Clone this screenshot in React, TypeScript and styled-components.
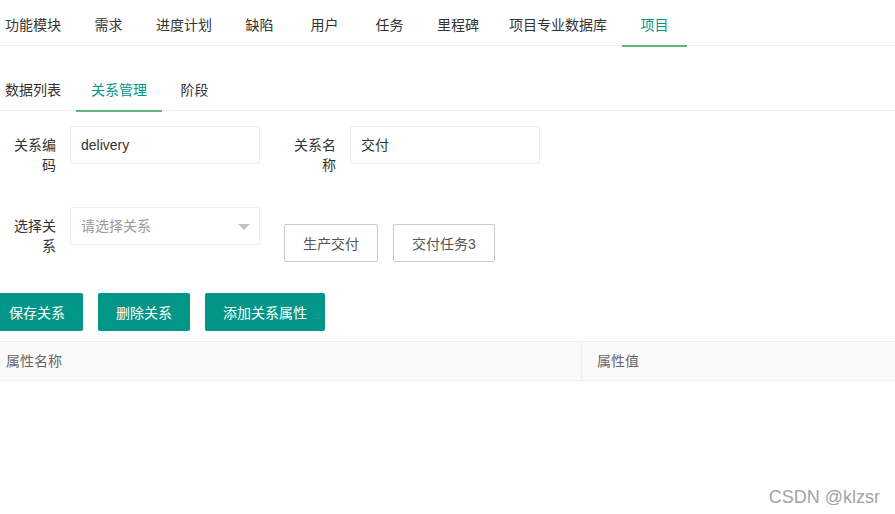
import styled, { createGlobalStyle } from 'styled-components'

const GlobalStyle = createGlobalStyle`
    html, body {
        margin: 0;
        padding: 0;
        overflow: hidden;
        background: #fff;
    }
    body {
        font-family: "Liberation Sans", "Noto Sans CJK SC", sans-serif;
        font-size: 14px;
        color: #333;
    }
`;

const Page = styled.div`
    position: relative;
    width: 895px;
    height: 514px;
    overflow: hidden;
`;

const TabBar = styled.ul<{ $top: number }>`
    display: flex;
    list-style: none;
    margin: ${p => p.$top}px 0 0 -10px;
    padding: 0;
    height: 40px;
    border-bottom: 1px solid #eee;
`;

const Tab = styled.li<{ $active?: boolean }>`
    position: relative;
    min-width: 65px;
    padding: 0 15px;
    box-sizing: border-box;
    text-align: center;
    line-height: 40px;
    height: 40px;
    white-space: nowrap;
    color: ${p => (p.$active ? '#009688' : '#333')};
    cursor: pointer;

    &::after {
        content: '';
        display: ${p => (p.$active ? 'block' : 'none')};
        position: absolute;
        left: 0;
        right: 0;
        bottom: -2px;
        height: 2px;
        background: #5fb878;
    }
`;

const FormRow = styled.div<{ $top: number }>`
    display: flex;
    align-items: flex-start;
    margin-top: ${p => p.$top}px;
`;

const Field = styled.div`
    display: flex;
    align-items: flex-start;
    margin-right: 20px;
`;

const Label = styled.label`
    width: 43px;
    padding: 9px 14px 9px 13px;
    line-height: 20px;
    text-align: right;
    color: #333;
`;

const Input = styled.div<{ $placeholder?: boolean }>`
    position: relative;
    width: 190px;
    height: 38px;
    box-sizing: border-box;
    border: 1px solid #eee;
    border-radius: 2px;
    padding-left: 10px;
    line-height: 36px;
    color: ${p => (p.$placeholder ? '#999' : '#333')};
`;

const Caret = styled.span`
    position: absolute;
    right: 9px;
    top: 16px;
    width: 0;
    height: 0;
    border-left: 6px solid transparent;
    border-right: 6px solid transparent;
    border-top: 6px solid #c2c2c2;
`;

const OptionGroup = styled.div`
    display: flex;
    gap: 15px;
    margin-top: 17px;
    margin-left: 4px;
`;

const OptionButton = styled.button`
    height: 38px;
    padding: 0 18px;
    border: 1px solid #c9c9c9;
    border-radius: 2px;
    background: #fff;
    color: #555;
    font: inherit;
    white-space: nowrap;
`;

const ActionBar = styled.div`
    display: flex;
    gap: 15px;
    margin: 28px 0 0 -9px;
`;

const PrimaryButton = styled.button`
    height: 38px;
    padding: 0 18px;
    border: none;
    border-radius: 2px;
    background: #009688;
    color: #fff;
    font: inherit;
    white-space: nowrap;
`;

const Table = styled.div`
    display: grid;
    grid-template-columns: 590px 590px;
    margin: 10px 0 0 -9px;
    width: 1180px;
    border-top: 1px solid #eee;
    border-bottom: 1px solid #eee;
    background: #fafafa;
`;

const HeadCell = styled.div`
    padding: 9px 15px;
    line-height: 20px;
    color: #666;
    & + & {
        border-left: 1px solid #eee;
    }
`;

const Watermark = styled.div`
    position: absolute;
    right: 15px;
    bottom: 6px;
    font-family: "Liberation Sans", sans-serif;
    font-size: 18px;
    color: #a3a3a3;
    text-shadow: 0 0 1px #fff;
`;

const mainTabs = ['功能模块', '需求', '进度计划', '缺陷', '用户', '任务', '里程碑', '项目专业数据库', '项目']
const subTabs = ['数据列表', '关系管理', '阶段']

export default function App() {
    return (
        <Page>
            <GlobalStyle />
            <TabBar $top={5}>
                {mainTabs.map(t => (
                    <Tab key={t} $active={t === '项目'}>{t}</Tab>
                ))}
            </TabBar>
            <TabBar $top={24}>
                {subTabs.map(t => (
                    <Tab key={t} $active={t === '关系管理'}>{t}</Tab>
                ))}
            </TabBar>

            <FormRow $top={15}>
                <Field>
                    <Label>关系编码</Label>
                    <Input>delivery</Input>
                </Field>
                <Field>
                    <Label>关系名称</Label>
                    <Input>交付</Input>
                </Field>
            </FormRow>

            <FormRow $top={23}>
                <Field>
                    <Label>选择关系</Label>
                    <Input $placeholder>
                        请选择关系
                        <Caret />
                    </Input>
                </Field>
                <OptionGroup>
                    <OptionButton>生产交付</OptionButton>
                    <OptionButton>交付任务3</OptionButton>
                </OptionGroup>
            </FormRow>

            <ActionBar>
                <PrimaryButton>保存关系</PrimaryButton>
                <PrimaryButton>删除关系</PrimaryButton>
                <PrimaryButton>添加关系属性</PrimaryButton>
            </ActionBar>

            <Table>
                <HeadCell>属性名称</HeadCell>
                <HeadCell>属性值</HeadCell>
            </Table>

            <Watermark>CSDN @klzsr</Watermark>
        </Page>
    )
}
